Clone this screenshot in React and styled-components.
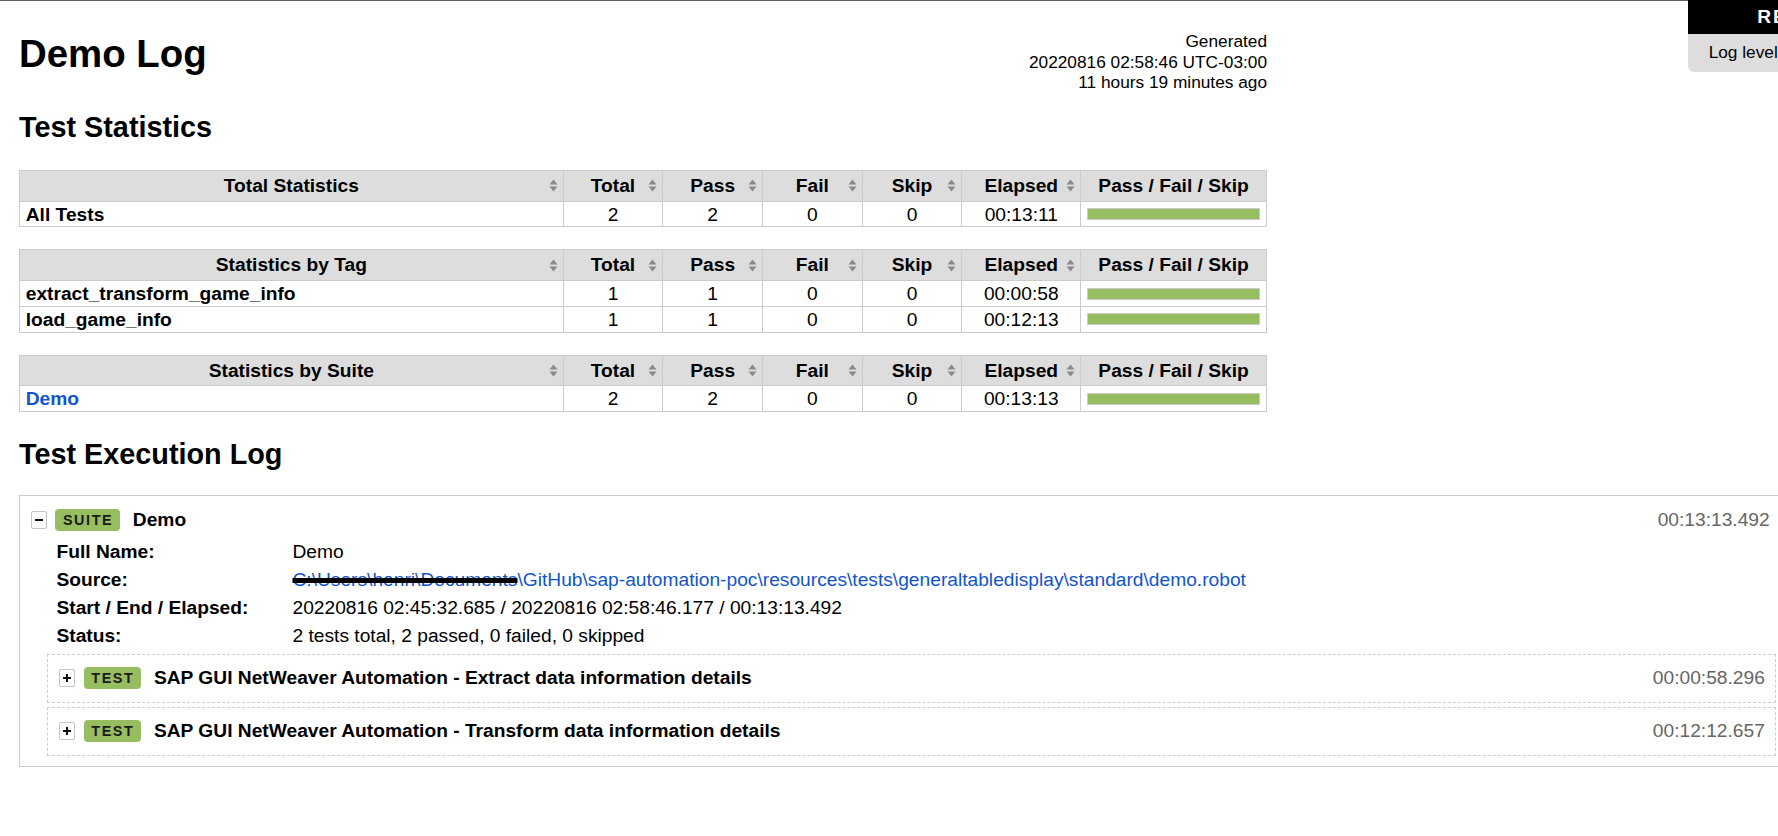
import styled, { createGlobalStyle } from "styled-components";

const GlobalStyle = createGlobalStyle`
  html, body {
    margin: 0;
    padding: 0;
    overflow: hidden;
  }
  body {
    font-family: "Liberation Sans", Arial, Helvetica, sans-serif;
    font-size: 19.2px;
    color: black;
    background: white;
  }
`;

const Page = styled.div`
  border-top: 1px solid #5f5f5f;
  padding: 30px 0 40px 19px;
  width: 1762px;
`;

const Header = styled.div`
  width: 1248px;
  display: flex;
  justify-content: space-between;
  align-items: flex-start;
`;

const Title = styled.h1`
  margin: 1px 0 0;
  font-size: 38.4px;
  line-height: 44px;
  font-weight: bold;
`;

const Generated = styled.div`
  text-align: right;
  font-size: 17.28px;
  line-height: 20.7px;
  white-space: nowrap;
`;

const SectionTitle = styled.h2`
  margin: ${(p) => p.$top}px 0 ${(p) => p.$bottom}px;
  font-size: 28.8px;
  line-height: 33px;
  font-weight: bold;
`;

const TopRight = styled.div`
  position: fixed;
  top: 0;
  left: 1688px;
  width: 230px;
  z-index: 10;
  text-align: center;
`;

const ReportLink = styled.a`
  display: block;
  background: black;
  color: white;
  font-weight: bold;
  letter-spacing: 0.1em;
  padding: 5.76px 0;
  line-height: 22px;
  text-decoration: none;
`;

const LogLevel = styled.div`
  padding: 5.76px 0;
  font-size: 17.28px;
  line-height: 26px;
  background: #ddd;
  border-bottom-left-radius: 6px;
`;

const FakeSelect = styled.span`
  display: inline-block;
  width: 100px;
  height: 24px;
  margin-left: 4px;
  vertical-align: middle;
  border: 1px solid #888;
  border-radius: 2px;
  background: #fff;
  text-align: left;
  padding-left: 4px;
  line-height: 24px;
  font-size: 16px;
`;

const StatsTable = styled.table`
  width: 1248px;
  border-collapse: collapse;
  table-layout: fixed;
  margin-bottom: 22px;
`;

const Th = styled.th`
  position: relative;
  background: #ddd;
  border: 1px solid #ccc;
  padding: 3.84px 5.76px;
  line-height: 22px;
  font-weight: bold;
  text-align: center;
  width: ${(p) => (p.$w ? `${p.$w}px` : "auto")};
`;

const Td = styled.td`
  border: 1px solid #ccc;
  padding: 1.92px 5.76px;
  line-height: 21px;
  vertical-align: middle;
  text-align: ${(p) => p.$align || "center"};
`;

const StatName = styled.span`
  font-weight: bold;
`;

const StatLink = styled.a`
  font-weight: bold;
  color: #15c;
  text-decoration: none;
`;

const SortSvg = styled.svg`
  position: absolute;
  right: 5px;
  top: 50%;
  margin-top: -6.5px;
`;

const Graph = styled.div`
  border: 1px solid #ccc;
  height: 10px;
  background: #f2f2f2;
`;

const PassBar = styled.div`
  height: 100%;
  background: #97bd61;
`;

const Element = styled.div`
  border: 1px ${(p) => (p.$dashed ? "dashed" : "solid")} #ccc;
  padding: 5.76px 3.84px;
  margin: ${(p) => (p.$dashed ? "4px 0" : "0")};
`;

const ElementHeader = styled.div`
  display: flex;
  align-items: center;
  padding: 6.8px 6.5px 6.9px 7px;
  line-height: 22px;
`;

const Toggle = styled.span`
  box-sizing: border-box;
  width: 16px;
  height: 18px;
  border: 1px solid #c4c4c4;
  border-radius: 2px;
  background: #fff;
  display: inline-flex;
  align-items: center;
  justify-content: center;
  margin-right: 8.5px;
  flex-shrink: 0;
`;

const Label = styled.span`
  background: #97bd61;
  border-radius: 4px;
  padding: 3px 7px 3px 7.6px;
  font-size: 14.4px;
  line-height: 16px;
  letter-spacing: 1.6px;
  font-weight: bold;
  color: #1a1a1a;
  margin-right: 12.5px;
`;

const Name = styled.span`
  font-weight: bold;
`;

const Elapsed = styled.span`
  margin-left: auto;
  color: #666;
`;

const Metadata = styled.table`
  border-collapse: collapse;
  margin-left: 26.9px;
`;

const MetaTh = styled.th`
  text-align: left;
  font-weight: bold;
  width: 224.5px;
  padding: 3px 5.76px;
  line-height: 22px;
  vertical-align: top;
`;

const MetaTd = styled.td`
  padding: 3px 5.76px;
  line-height: 22px;
`;

const SourceLink = styled.a`
  color: #15c;
  text-decoration: none;
`;

const Redacted = styled.span`
  text-decoration: line-through;
  text-decoration-color: #000;
  text-decoration-thickness: 5px;
`;

const Children = styled.div`
  margin-left: 23.5px;
`;

const statTables = [
  {
    title: "Total Statistics",
    rows: [{ name: "All Tests", total: 2, pass: 2, fail: 0, skip: 0, elapsed: "00:13:11" }],
  },
  {
    title: "Statistics by Tag",
    rows: [
      { name: "extract_transform_game_info", total: 1, pass: 1, fail: 0, skip: 0, elapsed: "00:00:58" },
      { name: "load_game_info", total: 1, pass: 1, fail: 0, skip: 0, elapsed: "00:12:13" },
    ],
  },
  {
    title: "Statistics by Suite",
    rows: [{ name: "Demo", link: true, total: 2, pass: 2, fail: 0, skip: 0, elapsed: "00:13:13" }],
  },
];

const tests = [
  { name: "SAP GUI NetWeaver Automation - Extract data information details", elapsed: "00:00:58.296" },
  { name: "SAP GUI NetWeaver Automation - Transform data information details", elapsed: "00:12:12.657" },
];

function SortIcon() {
  return (
    <SortSvg width="9" height="13" viewBox="0 0 9 13">
      <path d="M0.5 5.6L4.5 0.6L8.5 5.6Z M0.5 7.4L4.5 12.4L8.5 7.4Z" fill="#8a8a8a" />
    </SortSvg>
  );
}

function ToggleIcon({ open }) {
  return (
    <Toggle>
      <svg width="8" height="8" viewBox="0 0 8 8">
        <rect x="0" y="3" width="8" height="2" fill="#111" />
        {!open && <rect x="3" y="0" width="2" height="8" fill="#111" />}
      </svg>
    </Toggle>
  );
}

function StatTable({ title, rows }) {
  return (
    <StatsTable>
      <thead>
        <tr>
          <Th>{title}<SortIcon /></Th>
          <Th $w={87.2}>Total<SortIcon /></Th>
          <Th $w={87.2}>Pass<SortIcon /></Th>
          <Th $w={87.2}>Fail<SortIcon /></Th>
          <Th $w={87.2}>Skip<SortIcon /></Th>
          <Th $w={106.2}>Elapsed<SortIcon /></Th>
          <Th $w={173.4}>Pass / Fail / Skip</Th>
        </tr>
      </thead>
      <tbody>
        {rows.map((r) => (
          <tr key={r.name}>
            <Td $align="left">
              {r.link ? <StatLink href="#">{r.name}</StatLink> : <StatName>{r.name}</StatName>}
            </Td>
            <Td>{r.total}</Td>
            <Td>{r.pass}</Td>
            <Td>{r.fail}</Td>
            <Td>{r.skip}</Td>
            <Td>{r.elapsed}</Td>
            <Td>
              <Graph>
                <PassBar style={{ width: `${(r.pass / r.total) * 100}%` }} />
              </Graph>
            </Td>
          </tr>
        ))}
      </tbody>
    </StatsTable>
  );
}

export default function App() {
  return (
    <>
      <GlobalStyle />
      <TopRight>
        <ReportLink href="#">REPORT</ReportLink>
        <LogLevel>
          Log level: <FakeSelect>INFO</FakeSelect>
        </LogLevel>
      </TopRight>
      <Page>
        <Header>
          <Title>Demo Log</Title>
          <Generated>
            Generated
            <br />
            20220816 02:58:46 UTC-03:00
            <br />
            11 hours 19 minutes ago
          </Generated>
        </Header>

        <SectionTitle $top={17.4} $bottom={26.5}>Test Statistics</SectionTitle>
        {statTables.map((t) => (
          <StatTable key={t.title} title={t.title} rows={t.rows} />
        ))}

        <SectionTitle $top={25.5} $bottom={24.5}>Test Execution Log</SectionTitle>
        <Element>
          <ElementHeader>
            <ToggleIcon open />
            <Label>SUITE</Label>
            <Name>Demo</Name>
            <Elapsed>00:13:13.492</Elapsed>
          </ElementHeader>
          <Metadata>
            <tbody>
              <tr>
                <MetaTh>Full Name:</MetaTh>
                <MetaTd>Demo</MetaTd>
              </tr>
              <tr>
                <MetaTh>Source:</MetaTh>
                <MetaTd>
                  <SourceLink href="#">
                    <Redacted>C:\Users\henri\Documents</Redacted>
                    \GitHub\sap-automation-poc\resources\tests\generaltabledisplay\standard\demo.robot
                  </SourceLink>
                </MetaTd>
              </tr>
              <tr>
                <MetaTh>Start / End / Elapsed:</MetaTh>
                <MetaTd>20220816 02:45:32.685 / 20220816 02:58:46.177 / 00:13:13.492</MetaTd>
              </tr>
              <tr>
                <MetaTh>Status:</MetaTh>
                <MetaTd>2 tests total, 2 passed, 0 failed, 0 skipped</MetaTd>
              </tr>
            </tbody>
          </Metadata>
          <Children>
            {tests.map((t) => (
              <Element $dashed key={t.name}>
                <ElementHeader>
                  <ToggleIcon />
                  <Label>TEST</Label>
                  <Name>{t.name}</Name>
                  <Elapsed>{t.elapsed}</Elapsed>
                </ElementHeader>
              </Element>
            ))}
          </Children>
        </Element>
      </Page>
    </>
  );
}
